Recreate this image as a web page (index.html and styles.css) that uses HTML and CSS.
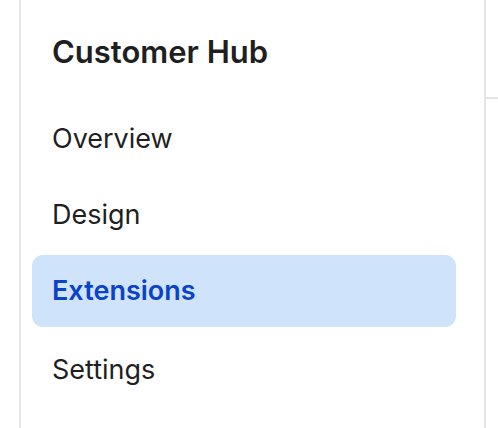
FILE: index.html
```html
<!DOCTYPE html>
<html lang="en">
<head>
    <meta charset="UTF-8">
    <meta name="viewport" content="width=device-width, initial-scale=1.0">
    <title>Customer Hub</title>
    <link rel="stylesheet" href="styles.css">
</head>
<body>
    <div class="layout">
        <div class="gutter"></div>
        <aside class="sidebar">
            <h1 class="sidebar-title">Customer Hub</h1>
            <nav class="nav">
                <a class="nav-item" href="#">Overview</a>
                <a class="nav-item" href="#">Design</a>
                <a class="nav-item active" href="#">Extensions</a>
                <a class="nav-item last" href="#">Settings</a>
            </nav>
        </aside>
        <main class="content">
            <div class="content-header"></div>
        </main>
    </div>
</body>
</html>
```

FILE: styles.css
```css
* {
    box-sizing: border-box;
}

body {
    font-family: 'Inter', 'Noto Sans', sans-serif;
    margin: 0;
    padding: 0;
    background-color: #fff;
    color: #1f1f1f;
}

.layout {
    display: flex;
    height: 428px;
}

.gutter {
    width: 19px;
    flex-shrink: 0;
}

.sidebar {
    width: 467px;
    flex-shrink: 0;
    border-left: 2px solid #e3e5e8;
    border-right: 2px solid #e3e5e8;
    padding: 34px 28px 0 11px;
}

.sidebar-title {
    margin: 0 0 33px;
    padding-left: 20px;
    font-size: 31px;
    line-height: 36px;
    font-weight: 600;
    color: #1f1f1f;
}

.nav {
    display: flex;
    flex-direction: column;
    gap: 4px;
}

.nav-item {
    display: flex;
    align-items: center;
    height: 72px;
    padding-left: 20px;
    border-radius: 11px;
    font-size: 27px;
    line-height: 32px;
    color: #1f1f1f;
    text-decoration: none;
}

.nav-item.active {
    background-color: #cfe3fa;
    color: #0a43c6;
    font-weight: 600;
}

.nav-item.last {
    margin-top: 3px;
}

.content {
    flex: 1;
}

.content-header {
    height: 99px;
    border-bottom: 2px solid #e3e5e8;
}
```
